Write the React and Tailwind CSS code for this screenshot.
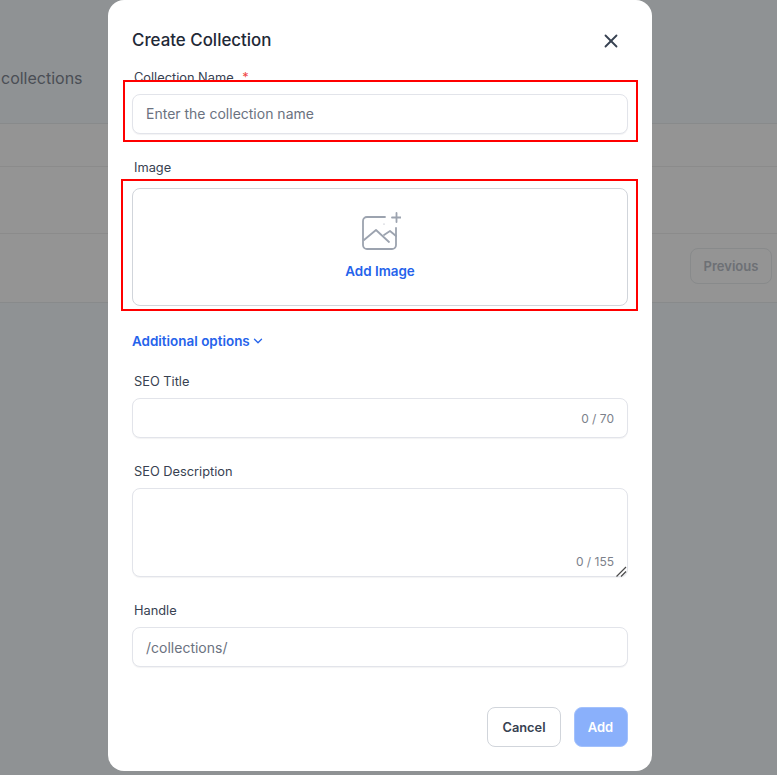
import React from 'react';
import { X, ChevronDown } from 'lucide-react';

const fieldClass =
  'block w-full h-10 rounded-lg border border-[#e2e4ea] bg-white px-[13px] text-sm text-[#374151] placeholder:text-[#6b7280] outline-none shadow-[0_1px_1px_rgba(16,24,40,0.05)]';

function Label({ children, className = '' }) {
  return <div className={`h-5 pl-0.5 pt-px text-[12.8px] leading-5 text-[#374151] ${className}`}>{children}</div>;
}

function ImageAddIcon() {
  return (
    <svg className="ml-[2px]" width="40" height="40" viewBox="0 0 40 40" fill="none" stroke="#9ca3af" strokeWidth="1.8" strokeLinecap="round" strokeLinejoin="round">
      <path d="M24 5H6a4 4 0 0 0-4 4v24a4 4 0 0 0 4 4h25a4 4 0 0 0 4-4V16" />
      <path d="M3 28 15 18l13 12" />
      <path d="M23 23l6-4 6 5" />
      <path d="M35.5 1v9M31 5.500h9" />
      <circle cx="23" cy="12" r="0.6" fill="#9ca3af" stroke="none" />
    </svg>
  );
}

function Background() {
  return (
    <div className="flex h-full flex-col bg-[#8f9294]">
      <div className="flex h-[123px] shrink-0 items-start pl-px pt-[66px] text-base leading-6 text-[#4a4e55]">collections</div>
      <div className="border-y border-[#888a8b] bg-[#949494]">
        <div className="h-[43px] border-b border-[#8b8b8b]" />
        <div className="h-[67px] border-b border-[#8b8b8b]" />
        <div className="flex h-[68px] items-start justify-end pr-[5px] pt-[14px]">
          <div className="flex h-9 w-[82px] items-center justify-center rounded-lg border border-[#888a8b] pt-px text-[13px] font-semibold text-[#6d7075]">
            Previous
          </div>
        </div>
      </div>
    </div>
  );
}

export default function App() {
  return (
    <div className="relative h-[775px] w-[777px] overflow-hidden font-['Inter',sans-serif]">
      <Background />

      <div className="absolute left-[108px] top-0 h-[771px] w-[544px] rounded-2xl bg-white px-6 pt-[26px]">
        <div className="flex items-start justify-between">
          <h2 className="text-[16.9px] leading-7 font-medium text-[#1f2937]">Create Collection</h2>
          <X size={22} strokeWidth={2} className="mr-[6px] mt-1 text-[#374151]" />
        </div>

        <Label className="mt-[13px]">
          Collection Name <span className="ml-[5px] text-[#ef4444]">*</span>
        </Label>
        <div className="relative -ml-[9px] -mr-[10px] -mt-[7px] border-2 border-[#ff0000] bg-white pb-[6px] pl-[7px] pr-2 pt-3">
          <input className={`${fieldClass} pb-0.5`} placeholder="Enter the collection name" />
        </div>

        <Label className="mt-[15px]">Image</Label>
        <div className="-ml-[11px] -mr-[10px] mt-0.5 border-2 border-[#ff0000] pb-[3px] pl-[9px] pr-2 pt-[7px]">
          <div className="flex h-[118px] flex-col items-center rounded-lg border border-[#d1d5db] pt-[23px]">
            <ImageAddIcon />
            <div className="mt-[9px] text-[13.4px] leading-5 font-semibold text-[#2563eb]">Add Image</div>
          </div>
        </div>

        <div className="mt-5 flex items-center gap-px text-[13.45px] leading-5 font-semibold text-[#2563eb]">
          Additional options
          <ChevronDown size={14} strokeWidth={2.25} />
        </div>

        <Label className="mt-5">SEO Title</Label>
        <div className="relative mt-[7px]">
          <input className={fieldClass} />
          <span className="absolute right-[14px] top-3 text-xs leading-[18px] text-[#7c818b]">0 / 70</span>
        </div>

        <Label className="mt-[23px]">SEO Description</Label>
        <div className="relative mt-[7px]">
          <textarea className="block h-[89px] w-full resize-none rounded-lg border border-[#e2e4ea] bg-white px-[13px] py-2 text-sm outline-none shadow-[0_1px_1px_rgba(16,24,40,0.05)]" />
          <span className="absolute bottom-[6px] right-[14px] text-xs leading-[18px] text-[#7c818b]">0 / 155</span>
          <svg className="absolute bottom-0 right-px" width="11" height="11" viewBox="0 0 11 11" fill="none" stroke="#4b4b4b" strokeWidth="1.2">
            <path d="M0.500 10.500 10 1M5 10.500 10 5.500" />
          </svg>
        </div>

        <Label className="mt-[23px]">Handle</Label>
        <input className={`${fieldClass} mt-[7px]`} placeholder="/collections/" />

        <div className="mt-10 flex justify-end gap-[13px]">
          <button className="h-10 w-[74px] rounded-lg border border-[#d1d5db] bg-white pt-px text-[12.8px] font-semibold text-[#374151]">
            Cancel
          </button>
          <button className="h-10 w-[54px] rounded-lg border border-[#a3c1fc] bg-[#8ab0fb] pt-px pr-px text-[13px] font-semibold text-white">Add</button>
        </div>
      </div>
    </div>
  );
}
